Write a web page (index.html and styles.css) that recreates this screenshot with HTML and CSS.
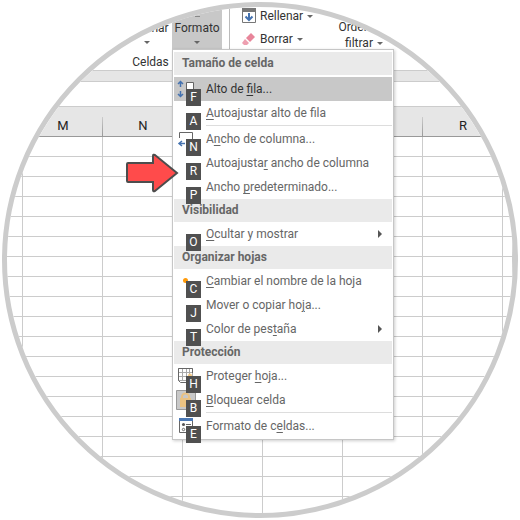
FILE: index.html
```
<!DOCTYPE html>
<html lang="es">
<head>
    <meta charset="UTF-8">
    <meta name="viewport" content="width=device-width, initial-scale=1.0">
    <title>Formato de celdas</title>
    <link rel="stylesheet" href="styles.css">
    <script>
        // Fill the sheet with empty rows
        document.addEventListener('DOMContentLoaded', function () {
            const body = document.getElementById('sheetBody');
            for (let i = 0; i < 19; i++) {
                const row = body.insertRow();
                for (let j = 0; j < 8; j++) {
                    row.insertCell();
                }
            }
        });
    </script>
</head>
<body>

    <div class="lens">
        <div class="ribbon">
            <div class="group cells-group">
                <div class="group-buttons">
                    <button class="big-btn">Eliminar<span class="caret"></span></button>
                    <div class="dropdown">
                        <button class="big-btn active"><span class="icon-edge"></span>Formato<span class="caret"></span></button>

                        <div class="menu">
                            <h3 class="menu-title">Tamaño de celda</h3>
                            <button class="menu-item selected">
                                <svg class="icon" width="20" height="20" viewBox="0 0 20 20" fill="none">
                                    <path d="M4.500 2.500v5.500M4.500 12v5.500M2 5l2.500-2.500L7 5M2 15l2.500 2.500L7 15" stroke="#4472b0" stroke-width="1.500"/>
                                    <path d="M10.500 3.500h7v11h-7z" fill="#fff" stroke="#666"/>
                                </svg>
                                <span>Alto de <u>f</u>ila...</span><kbd>F</kbd>
                            </button>
                            <button class="menu-item"><span><u>A</u>utoajustar alto de fila</span><kbd>A</kbd></button>
                            <hr>
                            <button class="menu-item">
                                <svg class="icon" width="20" height="20" viewBox="0 0 20 20" fill="none">
                                    <path d="M3.500 9V3.500h13V11" stroke="#666"/>
                                    <path d="M9 14.500H3M6 12l-3 2.500L6 17" stroke="#4472b0" stroke-width="1.500"/>
                                </svg>
                                <span>A<u>n</u>cho de columna...</span><kbd>N</kbd>
                            </button>
                            <button class="menu-item"><span>Autoajusta<u>r</u> ancho de columna</span><kbd>R</kbd></button>
                            <button class="menu-item"><span>Ancho <u>p</u>redeterminado...</span><kbd>P</kbd></button>

                            <h3 class="menu-title">Visibilidad</h3>
                            <button class="menu-item submenu"><span><u>O</u>cultar y mostrar</span><kbd>O</kbd></button>

                            <h3 class="menu-title">Organizar hojas</h3>
                            <button class="menu-item">
                                <svg class="icon" width="20" height="20" viewBox="0 0 20 20">
                                    <circle cx="9.500" cy="9.500" r="2.500" fill="#ff9a0a"/>
                                </svg>
                                <span><u>C</u>ambiar el nombre de la hoja</span><kbd>C</kbd>
                            </button>
                            <button class="menu-item"><span>Mover o copiar ho<u>j</u>a...</span><kbd>J</kbd></button>
                            <button class="menu-item submenu"><span>Color de pes<u>t</u>aña</span><kbd>T</kbd></button>

                            <h3 class="menu-title">Protección</h3>
                            <button class="menu-item">
                                <svg class="icon" width="20" height="20" viewBox="0 0 20 20" fill="none">
                                    <path d="M2.500 2.500h14v12h-14zM6.500 2.500v12M10.500 2.500v12M13.500 2.500v12M2.500 6.500h14M2.500 10.500h14" stroke="#aaa"/>
                                    <path d="M16.500 7V2.500h-14v12l2 2h7" stroke="#666"/>
                                    <path d="M12 9.500a2 2 0 0 1 4 0v2h-4z" fill="#f1c884"/>
                                </svg>
                                <span>Proteger <u>h</u>oja...</span><kbd>H</kbd>
                            </button>
                            <button class="menu-item">
                                <svg class="icon" width="20" height="20" viewBox="0 0 20 20" fill="none">
                                    <path d="M.500.500h19v19H.500z" fill="#c8c8c8" stroke="#999"/>
                                    <path d="M6 9V7a3.500 3.500 0 0 1 7 0v2" stroke="#eac282" stroke-width="2"/>
                                    <path d="M4 8h11v9H4z" fill="#eac282"/>
                                </svg>
                                <span><u>B</u>loquear celda</span><kbd>B</kbd>
                            </button>
                            <hr>
                            <button class="menu-item">
                                <svg class="icon" width="20" height="20" viewBox="0 0 20 20" fill="none">
                                    <path d="M3.500 3.500h13v13h-13z" fill="#fff" stroke="#666"/>
                                    <path d="M3 2h14v3H3z" fill="#4a78b5"/>
                                    <path d="M10 8.500h5M10 13.500h5" stroke="#666"/>
                                    <circle cx="7.500" cy="8.500" r="1.500" fill="#555"/>
                                    <circle cx="7.500" cy="13.500" r="1.200" stroke="#666"/>
                                </svg>
                                <span>Formato de c<u>e</u>ldas...</span><kbd>E</kbd>
                            </button>
                        </div>
                    </div>
                </div>
                <div class="group-label">Celdas</div>
            </div>

            <div class="group edit-group">
                <div class="edit-list">
                    <button class="small-btn">
                        <svg width="14" height="16" viewBox="0 0 14 16" fill="none">
                            <path d="M.500 1.500h13v13H.500z" fill="#fff" stroke="#777"/>
                            <path d="M0 0h14v4H0z" fill="#777"/>
                            <path d="M7 5v7M3.500 8.500L7 12l3.500-3.500" stroke="#4472b0" stroke-width="2"/>
                        </svg>
                        Rellenar<span class="caret"></span>
                    </button>
                    <button class="small-btn">
                        <svg width="14" height="16" viewBox="0 0 14 16">
                            <path d="M9 2l4 4-5 5-4-4z" fill="#e8859a"/>
                            <path d="M3 8l4 4-2 2H2L0 12z" fill="#ee9fb0"/>
                        </svg>
                        Borrar<span class="caret"></span>
                    </button>
                </div>
                <button class="sort-btn">Ordenar y<span class="sort-line">filtrar<span class="caret"></span></span></button>
            </div>
        </div>

        <div class="ribbon-edge"></div>
        <div class="formula-bar"></div>

        <table class="sheet">
            <colgroup>
                <col class="col-cut"><col class="col"><col class="col"><col class="col">
                <col class="col"><col class="col"><col class="col"><col>
            </colgroup>
            <thead>
                <tr><th></th><th>M</th><th>N</th><th></th><th></th><th></th><th>R</th><th></th></tr>
            </thead>
            <tbody id="sheetBody"></tbody>
        </table>

        <svg class="pointer" width="54" height="40" viewBox="0 0 54 40">
            <path d="M2 11q0-1 1-1h25V3q0-2 2-1l22 18-22 18q-2 1-2-1v-8H3q-1 0-1-1z" fill="#ff4b4b" stroke="#4d4d4d" stroke-width="2"/>
        </svg>
    </div>

</body>
</html>
```
FILE: styles.css
```
* {
    box-sizing: border-box;
}

body {
    margin: 2px;
    background-color: #fff;
    color: #333;
    font-family: Roboto, "Noto Sans", sans-serif;
    font-size: 12px;
    line-height: 16px;
}

button {
    padding: 0;
    border: none;
    background: none;
    color: inherit;
    font: inherit;
    cursor: pointer;
}

/* Round frame around the whole view */
.lens {
    position: relative;
    aspect-ratio: 1;
    overflow: hidden;
    border: 5px solid #ccc;
    border-radius: 50%;
}

.ribbon {
    display: flex;
    height: 64px;
    padding-left: 72px;
    border-bottom: 1px solid #ccc;
}

.cells-group {
    width: 143px;
}

.group-buttons {
    display: flex;
    justify-content: flex-end;
}

.group-label {
    padding-top: 4px;
    text-align: center;
}

.big-btn {
    display: flex;
    flex-direction: column;
    align-items: center;
    justify-content: flex-end;
    width: 50px;
    height: 43px;
    padding-bottom: 6px;
}

.big-btn .caret {
    margin: 5px 0 0;
}

.big-btn.active {
    background-color: #c8c8c8;
}

.icon-edge {
    width: 5px;
    height: 1px;
    margin-bottom: 3px;
    background-color: #888;
}

.caret {
    display: inline-block;
    margin-left: 4px;
    border: 3px solid transparent;
    border-top-color: #666;
    border-bottom: none;
    vertical-align: middle;
}

.edit-group {
    display: flex;
    gap: 20px;
    height: 56px;
    margin-left: 7px;
    padding-left: 12px;
    border-left: 1px solid #bbb;
}

.edit-list {
    display: flex;
    flex-direction: column;
    gap: 5px;
    width: 72px;
}

.small-btn {
    display: flex;
    align-items: center;
    height: 18px;
}

.small-btn svg {
    margin-right: 4px;
}

.sort-btn {
    align-self: flex-start;
    width: 60px;
    padding-top: 12px;
    text-align: center;
}

.sort-line {
    display: block;
}

.ribbon-edge {
    height: 11px;
    background-color: #e6e6e6;
    border-bottom: 1px solid #ccc;
}

.formula-bar {
    height: 25px;
    border-bottom: 1px solid #ccc;
}

.sheet {
    width: 100%;
    border-spacing: 0;
    table-layout: fixed;
}

.col-cut {
    width: 16px;
}

.col {
    width: 80px;
}

.sheet th {
    height: 30px;
    padding: 8px 0 0;
    background: linear-gradient(to bottom, #ccc, #999) right bottom / 1px 19px no-repeat #e6e6e6;
    border-bottom: 1px solid #999;
    color: #222;
    font-size: 13px;
    font-weight: normal;
}

.sheet td {
    height: 20px;
    padding: 0;
    border-right: 1px solid #ccc;
    border-bottom: 1px solid #ccc;
}

/* Drop-down menu */
.dropdown {
    position: relative;
}

.menu {
    position: absolute;
    z-index: 1;
    top: 42px;
    left: 0;
    width: 222px;
    padding: 2px 1px 1px;
    background-color: #fff;
    border: 1px solid #c6c6c6;
    box-shadow: 1px 1px 3px rgba(0, 0, 0, 0.2);
    color: #666;
}

.menu-title {
    height: 23px;
    margin: 0;
    padding: 3px 8px;
    background-color: #eaeaea;
    font-size: 12px;
    font-weight: bold;
    line-height: 17px;
}

.menu-title:first-child {
    margin-bottom: 2px;
}

.menu-item {
    display: flex;
    position: relative;
    align-items: center;
    width: 100%;
    height: 24px;
    padding-left: 32px;
    text-align: left;
    white-space: nowrap;
}

.menu-item u {
    text-underline-offset: 2px;
}

.menu-item.selected {
    background-color: #c8c8c8;
    color: #333;
}

.menu-item .icon {
    position: absolute;
    top: 2px;
    left: 2px;
}

/* Keyboard hint, lies over the icon and the next row */
.menu-item kbd {
    position: absolute;
    z-index: 1;
    top: 12px;
    left: 12px;
    width: 15px;
    height: 17px;
    background-color: #505050;
    color: #fff;
    font-family: inherit;
    font-size: 12px;
    line-height: 17px;
    text-align: center;
}

.submenu::after {
    content: "";
    margin-left: auto;
    margin-right: 10px;
    border: 4px solid transparent;
    border-left-color: #555;
    border-right: none;
}

.menu hr {
    height: 1px;
    margin: 0 0 1px 32px;
    border: none;
    background-color: #ddd;
}

.pointer {
    position: absolute;
    z-index: 2;
    top: 146px;
    left: 118px;
}
```
